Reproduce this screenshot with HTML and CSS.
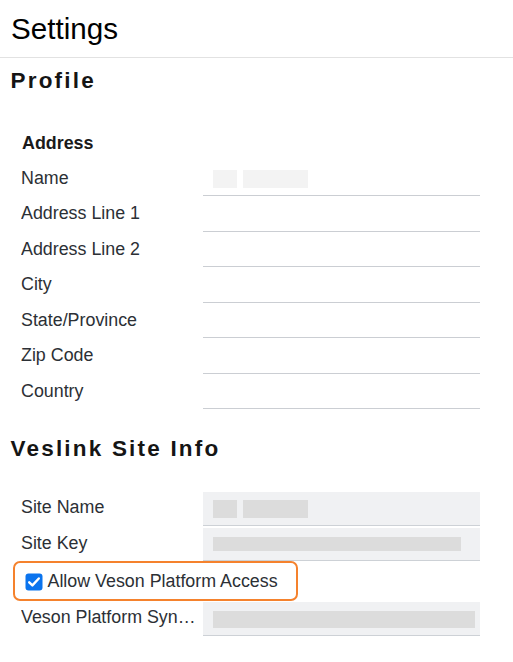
FILE: index.html
```html
<!DOCTYPE html>
<html lang="en">
<head>
<meta charset="utf-8">
<title>Settings</title>
<link rel="stylesheet" href="styles.css">
</head>
<body>
<header class="page-header">Settings</header>

<h2 class="section-title profile-title">Profile</h2>
<div class="form">
  <div class="subheading">Address</div>
  <div class="row">
    <div class="label">Name</div>
    <div class="field"><span class="blk blk-s light"></span><span class="blk blk-m light"></span></div>
  </div>
  <div class="row"><div class="label">Address Line 1</div><div class="field"></div></div>
  <div class="row"><div class="label">Address Line 2</div><div class="field"></div></div>
  <div class="row"><div class="label">City</div><div class="field"></div></div>
  <div class="row"><div class="label">State/Province</div><div class="field"></div></div>
  <div class="row"><div class="label">Zip Code</div><div class="field"></div></div>
  <div class="row"><div class="label">Country</div><div class="field"></div></div>
</div>

<h2 class="section-title site-title">Veslink Site Info</h2>
<div class="form site-form">
  <div class="row">
    <div class="label">Site Name</div>
    <div class="field filled name-field"><span class="blk blk-s"></span><span class="blk blk-m"></span></div>
  </div>
  <div class="row">
    <div class="label">Site Key</div>
    <div class="field filled"><span class="blk blk-key"></span></div>
  </div>
  <div class="check-row">
    <label class="check-label">
      <span class="checkbox"><svg width="18" height="18" viewBox="0 0 18 18"><rect x="0.5" y="0.5" width="17" height="17" rx="3" fill="#0b74ee"/><path d="M4.2 9.3 L7.4 12.4 L13.8 5.5" fill="none" stroke="#fff" stroke-width="2.4" stroke-linecap="round" stroke-linejoin="round"/></svg></span>
      <span>Allow Veson Platform Access</span>
    </label>
  </div>
  <div class="row">
    <div class="label">Veson Platform Sync Token</div>
    <div class="field filled"><span class="blk blk-sync"></span></div>
  </div>
</div>
</body>
</html>
```
FILE: styles.css
```css
html, body {
  margin: 0;
  padding: 0;
  background: #fff;
}

body {
  font-family: "Liberation Sans", Arial, sans-serif;
  color: #2c3035;
}

.page-header {
  height: 57px;
  line-height: 57px;
  padding-left: 11px;
  font-size: 29.6px;
  color: #000;
  border-bottom: 1px solid #e2e2e2;
}

.section-title {
  margin: 0;
  padding-left: 10.5px;
  font-size: 22.5px;
  line-height: 26px;
  font-weight: bold;
  letter-spacing: 2.2px;
  color: #151515;
}

.profile-title {
  margin-top: 10px;
}

.site-title {
  margin-top: 27px;
}

.form {
  padding-left: 21px;
  font-size: 17.85px;
}

.subheading {
  margin-top: 37px;
  margin-bottom: 5.5px;
  padding-left: 1px;
  line-height: 24px;
  font-weight: bold;
  color: #1a1a1a;
}

.site-form {
  margin-top: 28px;
}

.row {
  display: grid;
  grid-template-columns: 182px 277px;
  height: 35.5px;
}

.label {
  line-height: 35.5px;
  padding-right: 6px;
  white-space: nowrap;
  overflow: hidden;
  text-overflow: ellipsis;
}

.field {
  margin-top: 2px;
  border-bottom: 1px solid #cbced3;
  display: flex;
  align-items: center;
  gap: 6px;
  padding-left: 10px;
}

.field.filled {
  background: #f0f1f3;
  border-bottom-color: #cdd1d6;
}

.blk {
  display: block;
  height: 18px;
  background: #dcdcdc;
}

.blk.light {
  background: #f3f3f3;
}

.blk-s {
  width: 24px;
}

.blk-m {
  width: 65px;
}

.name-field .blk {
  margin-top: 1px;
}

.blk-key {
  width: 248px;
  height: 14px;
}

.blk-sync {
  width: 262px;
  height: 17px;
  margin-top: 2px;
}

.check-row {
  height: 39px;
  display: flex;
  align-items: flex-start;
}

.check-label {
  display: flex;
  align-items: center;
  gap: 5px;
  height: 40px;
  box-sizing: border-box;
  margin-left: -8px;
  margin-bottom: -1px;
  padding: 0 18px 0 9.5px;
  border: 2.5px solid #f5822d;
  border-radius: 7px;
  line-height: 35px;
  white-space: nowrap;
  background: #fff;
  position: relative;
}

.checkbox {
  display: block;
  width: 18px;
  height: 18px;
  margin-top: 1px;
}

.checkbox svg {
  display: block;
}
```
